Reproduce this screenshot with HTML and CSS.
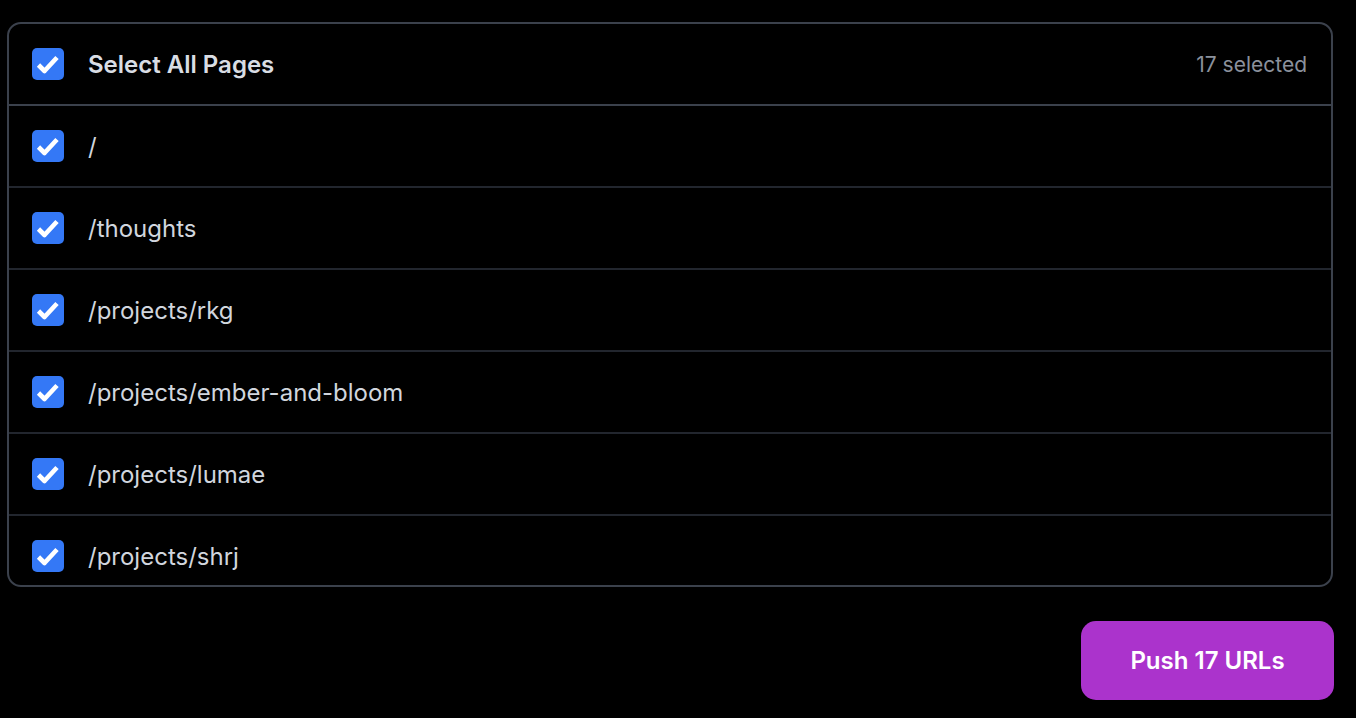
FILE: index.html
```html
<!DOCTYPE html>
<html lang="en">
<head>
  <meta charset="UTF-8" />
  <meta name="viewport" content="width=device-width, initial-scale=1.0"/>
  <title>Push URLs</title>
  <link rel="stylesheet" href="styles.css">
</head>
<body>
  <div class="pages-panel">
    <label class="pages-header">
      <span class="check"><svg viewBox="0 0 32 32"><polyline points="6.5,17 12.5,23 25,9.5"/></svg></span>
      <span class="header-title">Select All Pages</span>
      <span class="count">17 selected</span>
    </label>

    <div class="page-list">
      <label class="page-row"><span class="check"><svg viewBox="0 0 32 32"><polyline points="6.5,17 12.5,23 25,9.5"/></svg></span><span class="path">/</span></label>
      <label class="page-row"><span class="check"><svg viewBox="0 0 32 32"><polyline points="6.5,17 12.5,23 25,9.5"/></svg></span><span class="path">/thoughts</span></label>
      <label class="page-row"><span class="check"><svg viewBox="0 0 32 32"><polyline points="6.5,17 12.5,23 25,9.5"/></svg></span><span class="path">/projects/rkg</span></label>
      <label class="page-row"><span class="check"><svg viewBox="0 0 32 32"><polyline points="6.5,17 12.5,23 25,9.5"/></svg></span><span class="path">/projects/ember-and-bloom</span></label>
      <label class="page-row"><span class="check"><svg viewBox="0 0 32 32"><polyline points="6.5,17 12.5,23 25,9.5"/></svg></span><span class="path">/projects/lumae</span></label>
      <label class="page-row"><span class="check"><svg viewBox="0 0 32 32"><polyline points="6.5,17 12.5,23 25,9.5"/></svg></span><span class="path">/projects/shrj</span></label>
    </div>
  </div>

  <div class="actions">
    <button class="push-btn">Push 17 URLs</button>
  </div>
</body>
</html>
```

FILE: styles.css
```css
body {
  margin: 0;
  padding: 22px 22px 0 7px;
  background: #000;
  font-family: Inter, "Noto Sans", sans-serif;
  color: #d1d5db;
}

.pages-panel {
  width: 1322px;
  border: 2px solid #3b414c;
  border-radius: 14px;
  overflow: hidden;
}

.pages-header,
.page-row {
  display: flex;
  align-items: center;
  gap: 24px;
  height: 80px;
  padding: 0 24px 0 23px;
}

.pages-header {
  border-bottom: 2px solid #3b414c;
}

.header-title {
  font-size: 24px;
  font-weight: 600;
  color: #d9dde4;
}

.count {
  margin-left: auto;
  font-size: 21px;
  color: #8b919c;
}

/* list scrolls; the last row is cut by the panel edge */
.page-list {
  max-height: 479px;
  overflow-y: auto;
  scrollbar-width: none;
}

.page-row {
  border-bottom: 2px solid #22262e;
}

.path {
  font-size: 24px;
  color: #d1d6de;
}

.check {
  flex: none;
  width: 32px;
  height: 32px;
  border-radius: 5px;
  background: #3478f6;
}

.check svg {
  display: block;
  width: 32px;
  height: 32px;
}

.check polyline {
  fill: none;
  stroke: #fff;
  stroke-width: 4.6;
  stroke-linejoin: round;
}

.actions {
  display: flex;
  justify-content: flex-end;
  width: 1327px;
  margin-top: 34px;
}

.push-btn {
  width: 253px;
  height: 79px;
  border: none;
  border-radius: 15px;
  background: #ab33cc;
  color: #fff;
  font-family: inherit;
  font-size: 24px;
  font-weight: 600;
}
```
